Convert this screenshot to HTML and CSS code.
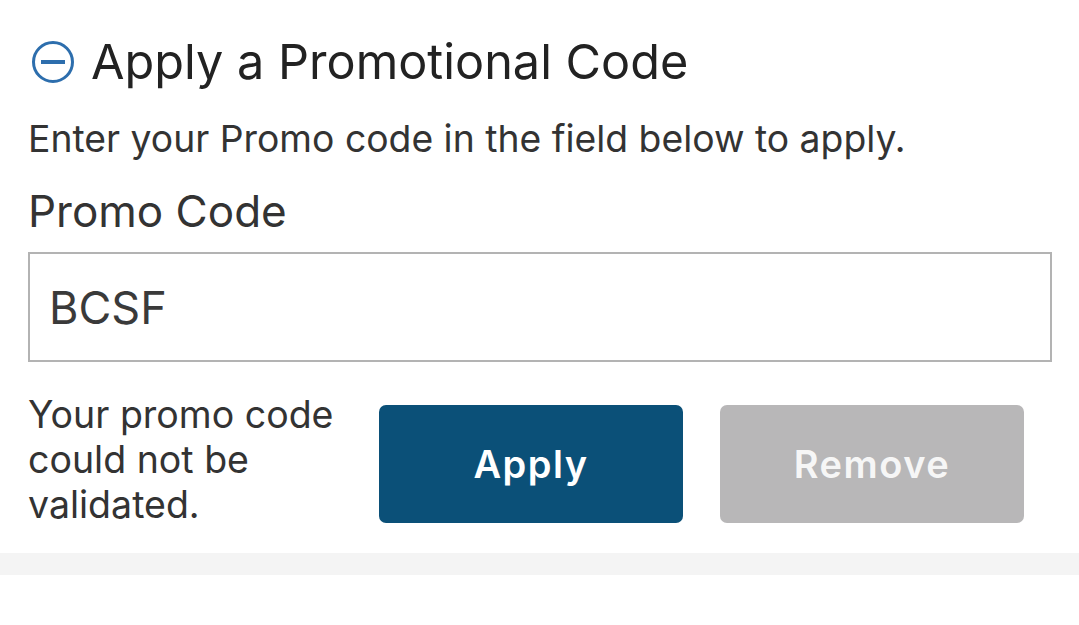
FILE: index.html
```html
<!DOCTYPE html>
<html lang="en">
<head>
  <meta charset="UTF-8">
  <meta name="viewport" content="width=device-width, initial-scale=1.0">
  <title>Apply a Promotional Code</title>
  <link rel="stylesheet" href="styles.css">
</head>
<body>
  <section class="promo">
    <h2 class="promo_title">
      <svg class="promo_icon" width="44" height="44" viewBox="0 0 44 44" aria-hidden="true">
        <circle cx="22" cy="22" r="19.5" fill="none" stroke="#2d6ead" stroke-width="3"/>
        <line x1="10" y1="22" x2="34" y2="22" stroke="#2d6ead" stroke-width="4"/>
      </svg>
      Apply a Promotional Code
    </h2>
    <p class="promo_hint">Enter your Promo code in the field below to apply.</p>
    <form class="promo_form">
      <label class="promo_label" for="code">Promo Code</label>
      <input class="promo_input" type="text" id="code" name="code" value="BCSF">
      <div class="promo_actions">
        <p class="promo_error">Your promo code could not be validated.</p>
        <button type="submit" class="btn btn_apply">Apply</button>
        <button type="button" class="btn btn_remove">Remove</button>
      </div>
    </form>
  </section>
  <div class="band"></div>
</body>
</html>
```

FILE: styles.css
```css
* {
  box-sizing: border-box;
}
body {
  margin: 0;
  background-color: #fff;
  font-family: Inter, Roboto, "Liberation Sans", sans-serif;
  color: #333;
}
.promo {
  padding: 38px 27px 26px 28px;
}
.promo_title {
  display: flex;
  align-items: center;
  gap: 16px;
  margin: 0;
  font-size: 48.6px;
  font-weight: 400;
  color: #222;
  line-height: 48px;
}
.promo_icon {
  margin-left: 3px;
  flex-shrink: 0;
}
.promo_hint {
  margin: 30px 0 0 0;
  font-size: 37.3px;
  line-height: 46px;
  color: #333;
}
.promo_form {
  display: flex;
  flex-direction: column;
}
.promo_label {
  margin: 25px 0 0 0;
  font-size: 44px;
  line-height: 48px;
  color: #333;
}
.promo_input {
  margin-top: 17px;
  width: 1024px;
  height: 110px;
  padding: 0 19px;
  border: 2px solid #b3b3b3;
  border-radius: 0;
  outline: 0;
  font-family: inherit;
  font-size: 45px;
  color: #3a3a3a;
}
.promo_actions {
  display: flex;
  align-items: center;
  margin-top: 38px;
}
.promo_error {
  width: 351px;
  margin: -8px 0 0 0;
  font-size: 37.5px;
  line-height: 45px;
  color: #333;
}
.btn {
  width: 304px;
  height: 118px;
  border: 0;
  border-radius: 7px;
  font-family: inherit;
  font-size: 38px;
  font-weight: 600;
  letter-spacing: 1.5px;
  color: #fff;
}
.btn_apply {
  background-color: #0b5078;
}
.btn_remove {
  margin-left: 37px;
  background-color: #b8b7b8;
  color: #f6f6f6;
}
.band {
  height: 22px;
  background-color: #f4f4f4;
}
```
